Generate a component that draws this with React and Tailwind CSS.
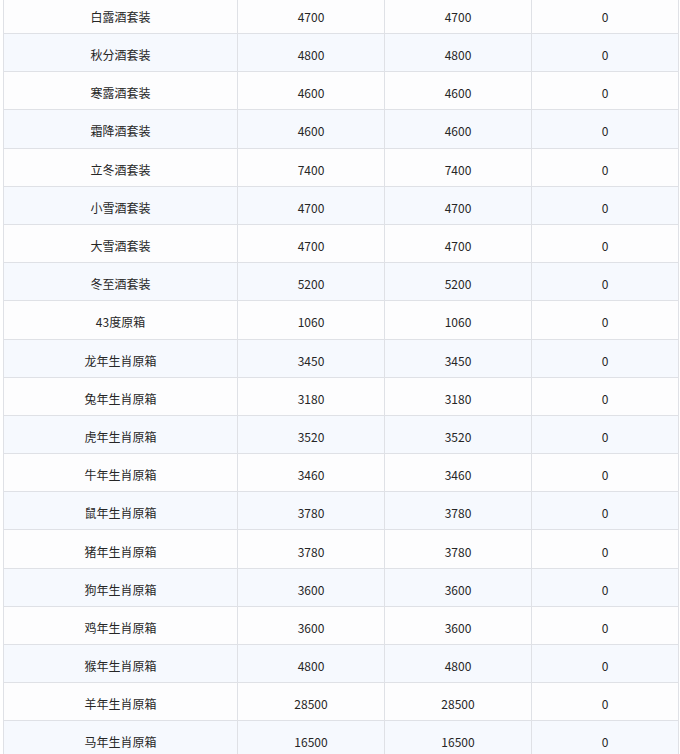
import React from "react";

const rows = [
  ["白露酒套装", "4700", "4700", "0"],
  ["秋分酒套装", "4800", "4800", "0"],
  ["寒露酒套装", "4600", "4600", "0"],
  ["霜降酒套装", "4600", "4600", "0"],
  ["立冬酒套装", "7400", "7400", "0"],
  ["小雪酒套装", "4700", "4700", "0"],
  ["大雪酒套装", "4700", "4700", "0"],
  ["冬至酒套装", "5200", "5200", "0"],
  ["43度原箱", "1060", "1060", "0"],
  ["龙年生肖原箱", "3450", "3450", "0"],
  ["兔年生肖原箱", "3180", "3180", "0"],
  ["虎年生肖原箱", "3520", "3520", "0"],
  ["牛年生肖原箱", "3460", "3460", "0"],
  ["鼠年生肖原箱", "3780", "3780", "0"],
  ["猪年生肖原箱", "3780", "3780", "0"],
  ["狗年生肖原箱", "3600", "3600", "0"],
  ["鸡年生肖原箱", "3600", "3600", "0"],
  ["猴年生肖原箱", "4800", "4800", "0"],
  ["羊年生肖原箱", "28500", "28500", "0"],
  ["马年生肖原箱", "16500", "16500", "0"],
];

export default function App() {
  return (
    <div className="h-[754px] overflow-hidden bg-white pl-[3px] pr-px">
      <div
        className="mt-[-4.2px] border-l border-r border-[#dfe1e6] text-[12px] text-[#262626]"
        style={{ fontFamily: '"Noto Sans CJK SC", "Noto Sans", sans-serif' }}
      >
        {rows.map((r, i) => (
          <div
            key={i}
            className={`grid grid-cols-[233px_147px_147px_1fr] h-[38.2px] border-b border-[#dfe1e6] ${
              i % 2 === 1 ? "bg-[#f6f9fe]" : "bg-[#fdfdfe]"
            }`}
          >
            {r.map((c, j) => (
              <div
                key={j}
                className={`flex items-center justify-center pt-[5px] ${
                  j > 0 ? "border-l border-[#dfe1e6]" : ""
                }`}
              >
                {c}
              </div>
            ))}
          </div>
        ))}
      </div>
    </div>
  );
}
